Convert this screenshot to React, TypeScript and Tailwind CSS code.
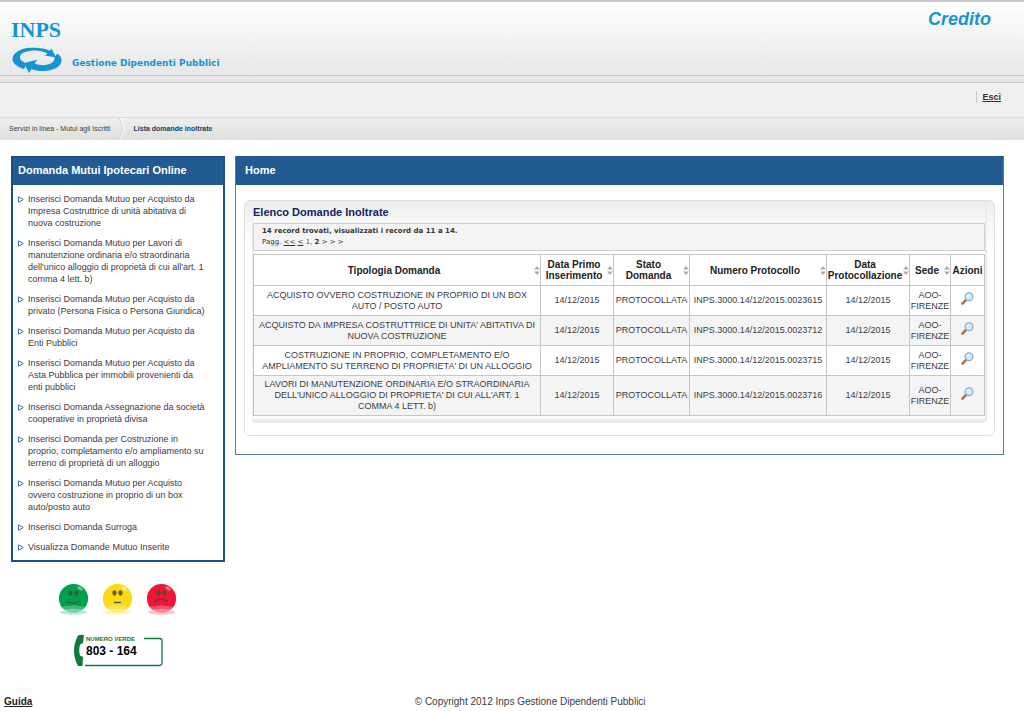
import type { ReactNode } from 'react';

const menuItems: string[][] = [
  ['Inserisci Domanda Mutuo per Acquisto da', 'Impresa Costruttrice di unità abitativa di', 'nuova costruzione'],
  ['Inserisci Domanda Mutuo per Lavori di', 'manutenzione ordinaria e/o straordinaria', "dell'unico alloggio di proprietà di cui all'art. 1", 'comma 4 lett. b)'],
  ['Inserisci Domanda Mutuo per Acquisto da', 'privato (Persona Fisica o Persona Giuridica)'],
  ['Inserisci Domanda Mutuo per Acquisto da', 'Enti Pubblici'],
  ['Inserisci Domanda Mutuo per Acquisto da', 'Asta Pubblica per immobili provenienti da', 'enti pubblici'],
  ['Inserisci Domanda Assegnazione da società', 'cooperative in proprietà divisa'],
  ['Inserisci Domanda per Costruzione in', 'proprio, completamento e/o ampliamento su', 'terreno di proprietà di un alloggio'],
  ['Inserisci Domanda Mutuo per Acquisto', 'ovvero costruzione in proprio di un box', 'auto/posto auto'],
  ['Inserisci Domanda Surroga'],
  ['Visualizza Domande Mutuo Inserite'],
];

const rows = [
  { tipologia: ['ACQUISTO OVVERO COSTRUZIONE IN PROPRIO DI UN BOX', 'AUTO / POSTO AUTO'], protocollo: 'INPS.3000.14/12/2015.0023615' },
  { tipologia: ["ACQUISTO DA IMPRESA COSTRUTTRICE DI UNITA' ABITATIVA DI", 'NUOVA COSTRUZIONE'], protocollo: 'INPS.3000.14/12/2015.0023712' },
  { tipologia: ['COSTRUZIONE IN PROPRIO, COMPLETAMENTO E/O', "AMPLIAMENTO SU TERRENO DI PROPRIETA' DI UN ALLOGGIO"], protocollo: 'INPS.3000.14/12/2015.0023715' },
  { tipologia: ['LAVORI DI MANUTENZIONE ORDINARIA E/O STRAORDINARIA', "DELL'UNICO ALLOGGIO DI PROPRIETA' DI CUI ALL'ART. 1", 'COMMA 4 LETT. b)'], protocollo: 'INPS.3000.14/12/2015.0023716' },
];

export default function App() {
  return (
    <div className="min-h-screen bg-white font-['Liberation_Sans',Arial,sans-serif] text-[9px] leading-3 text-[#3c3c44]">
      <Header />

      <div className="flex items-start gap-[10px] pt-4 pr-5 pl-[11px]">
        <aside className="w-[214px] shrink-0">
          <Menu />
          <div className="mt-[21px] flex justify-center gap-[13px] pr-[2px]">
            <Smiley label="Soddisfatto" color="#00a14e" mouth="M9 18.500 Q15 22 22 18" />
            <Smiley label="Neutro" color="#fbd914" mouth="M12 19.500 H19" />
            <Smiley label="Insoddisfatto" color="#ee1636" mouth="M8 19 Q15 13.500 22 19" />
          </div>
          <NumeroVerde />
        </aside>

        <main className="min-w-0 flex-1 border border-[#4d7cac] border-t-[#215b92] pb-[18px]">
          <h1 className="bg-[#215b92] px-[9px] pt-[7px] pb-2 text-[11px] leading-[13px] font-bold text-white">Home</h1>
          <div className="mx-2 mt-[15px] rounded-md border border-[#dde0e4] bg-linear-to-b from-[#eceeee] via-white via-20% to-white px-[7px] pb-3">
            <section className="rounded-sm border-r-2 border-b-4 border-l border-[#ececec] bg-white pb-[3px]">
              <h2 className="bg-linear-to-b from-[#eceeee] to-[#f8f8f8] pt-[5px] pb-1 text-[11px] leading-[13px] font-bold text-[#13245c]">Elenco Domande Inoltrate</h2>
              <div className="mb-[3px] border border-[#cfcfcf] bg-[#f4f4f4] px-2 py-[2px] font-['DejaVu_Sans',Verdana,sans-serif] text-[7px] leading-[11px] text-[#333]">
                <p className="font-bold">14 record trovati, visualizzati i record da 11 a 14.</p>
                <nav aria-label="Pagine">
                  Pagg. <a href="#first" className="underline">&lt;&lt;</a> <a href="#prev" className="underline">&lt;</a>{' '}
                  <a href="#page-1" className="text-[#b03030]">1</a>, <b>2</b> &gt; &gt; &gt;
                </nav>
              </div>
              <Results />
            </section>
          </div>
        </main>
      </div>

      <footer className="mt-[28px] flex px-1 text-[10px] leading-[14px]">
        <a href="#guida" className="font-bold text-[#222] underline">Guida</a>
        <p className="flex-1 pl-2 text-center">© Copyright 2012 Inps Gestione Dipendenti Pubblici</p>
      </footer>
    </div>
  );
}

function Header() {
  return (
    <header>
      <div className="flex h-[75px] items-start justify-between border-t-2 border-[#c9c9cb] bg-linear-to-b from-white to-[#e7e7e7] pr-[33px] pl-[11px]">
        <div className="flex items-end gap-[10px] pt-[5px]">
          <Logo />
          <span className="pb-[5px] font-['DejaVu_Sans',Verdana,sans-serif] text-[9px] font-bold text-[#1594d2]">Gestione Dipendenti Pubblici</span>
        </div>
        <span className="pt-[6px] text-[18px] leading-[22px] font-bold text-[#1596cf] italic">Credito</span>
      </div>
      <div className="h-2 border-y border-[#c9c9c9] bg-[#e6e6e6]" />
      <div className="flex h-[34px] items-center justify-end bg-[#f0f0f0] pr-[23px]">
        <a href="#esci" className="mb-[6px] border-l border-[#ccc] pl-[5px] text-[9px] font-bold text-[#333] underline">Esci</a>
      </div>
      <nav aria-label="Percorso" className="flex h-[23px] items-center border-t border-[#dcdcdc] bg-linear-to-b from-[#efefef] to-[#dfdfdd] pl-[9px] text-[7px]">
        <a href="#servizi">Servizi in linea - Mutui agli Iscritti</a>
        <svg className="mx-2 h-[22px] w-[7px]" viewBox="0 0 7 22" fill="none" aria-hidden="true">
          <path d="M1 0 L5 11 L1 22" stroke="#fff" />
          <path d="M0 0 L4 11 L0 22" stroke="#d4d4d4" />
        </svg>
        <b className="text-[#183c66]">Lista domande inoltrate</b>
      </nav>
    </header>
  );
}

function Menu() {
  return (
    <nav aria-label="Domanda Mutui" className="border-2 border-[#1c4f87]">
      <h2 className="bg-[#215b92] px-[5px] pt-[6px] pb-2 text-[11px] leading-[13px] font-bold text-white">Domanda Mutui Ipotecari Online</h2>
      <ul className="flex flex-col gap-2 px-[5px] pt-2 pb-[7px]">
        {menuItems.map((lines) => (
          <li key={lines.join(' ')} className="flex gap-1">
            <svg className="mt-[3px] h-[7px] w-[6px] shrink-0" viewBox="0 0 6 7" fill="#fff" stroke="#3f73a8" aria-hidden="true">
              <path d="M0.500 0.800 L5.300 3.500 L0.500 6.200 Z" />
            </svg>
            <a href="#domanda" className="whitespace-nowrap"><Lines lines={lines} /></a>
          </li>
        ))}
      </ul>
    </nav>
  );
}

function Results() {
  return (
    <table className="w-full table-fixed border-collapse text-center leading-[11px]">
      <colgroup>
        <col />
        <col className="w-[73px]" />
        <col className="w-[76px]" />
        <col className="w-[137px]" />
        <col className="w-[83px]" />
        <col className="w-[41px]" />
        <col className="w-[34px]" />
      </colgroup>
      <thead>
        <tr className="h-[31px] text-[10px] text-[#222]">
          <Th>Tipologia Domanda</Th>
          <Th>Data Primo<br />Inserimento</Th>
          <Th>Stato<br />Domanda</Th>
          <Th>Numero Protocollo</Th>
          <Th>Data<br />Protocollazione</Th>
          <Th>Sede</Th>
          <th className="border border-[#c6c6c6] p-0 whitespace-nowrap">Azioni</th>
        </tr>
      </thead>
      <tbody>
        {rows.map((row) => (
          <tr key={row.protocollo} className="h-[30px] even:bg-[#f4f4f4]">
            <Td><Lines lines={row.tipologia} /></Td>
            <Td>14/12/2015</Td>
            <Td>PROTOCOLLATA</Td>
            <Td>{row.protocollo}</Td>
            <Td>14/12/2015</Td>
            <Td>AOO-<br />FIRENZE</Td>
            <Td>
              <button type="button" aria-label="Visualizza domanda" className="block w-full">
                <Magnifier />
              </button>
            </Td>
          </tr>
        ))}
      </tbody>
    </table>
  );
}

function Th({ children }: { children: ReactNode }) {
  return (
    <th className="border border-[#c6c6c6] p-0">
      <div className="flex items-center whitespace-nowrap">
        <span className="flex-1">{children}</span>
        <svg className="h-[9px] w-[6px] shrink-0" viewBox="0 0 6 9" fill="#ababab" aria-hidden="true">
          <path d="M3 0 L6 3.500 H0 Z M0 5.500 H6 L3 9 Z" />
        </svg>
      </div>
    </th>
  );
}

function Td({ children }: { children: ReactNode }) {
  return <td className="border border-[#c6c6c6] px-0 py-[3px] whitespace-nowrap">{children}</td>;
}

function Lines({ lines }: { lines: string[] }) {
  return (
    <>
      {lines.map((line) => (
        <span key={line} className="block">{line}</span>
      ))}
    </>
  );
}

function Magnifier() {
  return (
    <svg className="mx-auto mb-1 h-[13px] w-[13px]" viewBox="0 0 13 13" fill="none" aria-hidden="true">
      <path d="M1.500 11.500 L5.200 7.800" stroke="#a9764a" strokeWidth="2.600" strokeLinecap="round" />
      <circle cx="8" cy="4.700" r="3.900" fill="#c9ecfa" stroke="#8fa9c6" strokeWidth="1.200" />
      <path d="M6 4.500 Q6.500 2.500 8.500 2.500" stroke="#fff" strokeWidth="1.200" />
    </svg>
  );
}

function Logo() {
  return (
    <svg className="h-[67px] w-[51px]" viewBox="0 0 51 67" fill="#1594d2" role="img" aria-label="INPS">
      <text x="25" y="30" textAnchor="middle" fontSize="22" fontWeight="bold" className="font-['Liberation_Serif','Times_New_Roman',serif]">INPS</text>
      <path d="M13 62 C6 60 1.500 56 1.500 52 C1.500 46 9 41 20 40.700 C28 40.500 35 41.500 39 43.700 L40.500 41.500 L45 50.500 L34 48.500 L36.500 46.500 C31 43.500 25 43 20 43.700 C13 44.500 9 47 9 50 C9 52 10 54 13 55 L15 58 Z" />
      <path d="M13 56 L26.500 52.800 L23.500 56.500 C34 60 43 57 43.500 51.500 C43.500 50 44 49 46.500 46.800 C49 48.500 50.500 50.500 50.500 53 C50.500 60 42 64 32 64 C27 64 24 63.500 20.500 62 L18 66 Z" />
    </svg>
  );
}

function Smiley({ label, color, mouth }: { label: string; color: string; mouth: string }) {
  return (
    <button type="button" aria-label={label}>
      <svg className="h-8 w-[31px]" viewBox="0 0 31 32" fill="none">
        <ellipse cx="15.500" cy="29.300" rx="13.500" ry="2.400" fill={color} opacity="0.25" />
        <circle cx="15.500" cy="15.500" r="14.600" fill={color} />
        <path d="M3 24 Q15.500 21 28 24 Q23 30 15.500 30 Q8 30 3 24 Z" fill="#fff" opacity="0.25" />
        <path d="M5 27 Q15.500 24.500 26 27 Q21 30.500 15.500 30.500 Q10 30.500 5 27 Z" fill="#fff" opacity="0.35" />
        <ellipse cx="22" cy="5.500" rx="3" ry="1.500" fill="#fff" opacity="0.4" transform="rotate(35 22 5.500)" />
        <ellipse cx="12.500" cy="10" rx="2.100" ry="2.700" fill="#4a4a36" opacity="0.85" />
        <ellipse cx="18.500" cy="10" rx="2.100" ry="2.700" fill="#4a4a36" opacity="0.85" />
        <path d={mouth} stroke="#4a4a36" strokeWidth="1.200" />
      </svg>
    </button>
  );
}

function NumeroVerde() {
  return (
    <svg className="mt-[18px] ml-[62px] h-[34px] w-[91px]" viewBox="0 0 91 34" role="img" aria-label="Numero verde 803 - 164">
      <path d="M12 32.500 H86 Q89 32.500 89 30 V8 Q89 5.500 86.500 5.500 H71" fill="none" stroke="#107a3c" strokeWidth="1.300" />
      <path d="M5 2.500 Q7 1.500 11 2 L10 10 L7 11.500 Q5.500 17.500 7 22.500 L10 24 L9.500 33 H5 Q-3 17.500 5 2.500 Z" fill="#107a3c" />
      <text x="13" y="8" fontSize="6" fontWeight="bold" fill="#107a3c">NUMERO VERDE</text>
      <text x="13" y="22" fontSize="12" fontWeight="bold" fill="#000">803 - 164</text>
    </svg>
  );
}
